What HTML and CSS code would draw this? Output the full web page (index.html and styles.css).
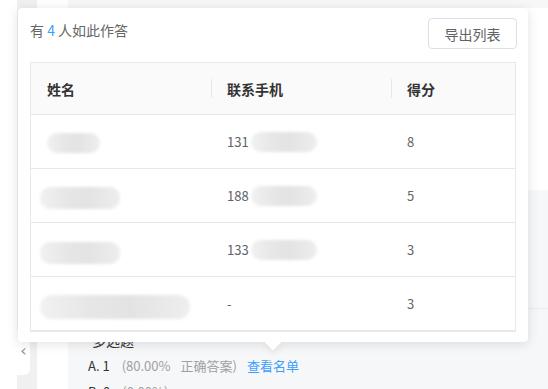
FILE: index.html
```html
<!DOCTYPE html>
<html lang="zh">
<head>
<meta charset="utf-8">
<link rel="stylesheet" href="styles.css">
</head>
<body>
<div class="page">
  <div class="gutter"></div>
  <div class="sidebar">
    <div class="handle"><span class="chev">‹</span></div>
  </div>
  <div class="strip"></div>
  <div class="content">
    <div class="card-top"></div>
    <div class="section">
      <div class="q-title">多选题</div>
      <div class="opt"><span class="opt-key">A. 1</span><span class="opt-meta">(80.00%</span><span class="opt-meta">正确答案)</span><a class="opt-link">查看名单</a></div>
      <div class="opt"><span class="opt-key">B. 0</span><span class="opt-meta">(0.00%)</span></div>
    </div>
  </div>

  <div class="popover">
    <div class="pop-head">
      <div class="pop-title">有 <span class="num">4</span> 人如此作答</div>
      <button class="btn">导出列表</button>
    </div>
    <div class="table">
      <div class="tr th">
        <div class="td">姓名</div>
        <div class="td sep">联系手机</div>
        <div class="td sep">得分</div>
      </div>
      <div class="tr">
        <div class="td"><span class="blob b1"></span></div>
        <div class="td">131<span class="blob p"></span></div>
        <div class="td score">8</div>
      </div>
      <div class="tr">
        <div class="td"><span class="blob b2"></span></div>
        <div class="td">188<span class="blob p"></span></div>
        <div class="td score">5</div>
      </div>
      <div class="tr">
        <div class="td"><span class="blob b3"></span></div>
        <div class="td">133<span class="blob p"></span></div>
        <div class="td score">3</div>
      </div>
      <div class="tr">
        <div class="td"><span class="blob b4"></span></div>
        <div class="td">-</div>
        <div class="td score">3</div>
      </div>
    </div>
    <div class="arrow"></div>
  </div>
</div>
</body>
</html>
```

FILE: styles.css
```css
* { box-sizing: border-box; }
html, body { margin: 0; padding: 0; }
body {
  width: 548px;
  height: 389px;
  overflow: hidden;
  background: #fff;
  font-family: "Noto Sans CJK SC", "Microsoft YaHei", sans-serif;
  font-size: 13px;
  color: #606266;
}
.page {
  position: relative;
  display: flex;
  height: 389px;
}
.gutter { width: 17px; background: #fff; }
.sidebar {
  width: 20px;
  background: #f0f0f0;
  padding-top: 330px;
}
.handle {
  width: 13px;
  height: 45px;
  background: #fff;
  border-radius: 0 0 6px 0;
  display: flex;
  align-items: center;
  justify-content: center;
  padding-bottom: 4px;
}
.chev { color: #909399; font-size: 16px; line-height: 1; font-family: "DejaVu Sans", sans-serif; }
.strip { width: 31px; background: #fff; }
.content {
  flex: 1;
  background: #f6f7f9;
  padding-top: 8px;
  display: flex;
  flex-direction: column;
  overflow: hidden;
}
.card-top {
  flex: 0 0 182px;
  background: #fff;
}
.section {
  flex: 1 0 auto;
  padding: 137px 0 0 20px;
  position: relative;
}
.section::before {
  content: "";
  position: absolute;
  left: 0; right: 0; top: 118px;
  height: 1px;
  background: #e9ebef;
}
.q-title {
  height: 26px;
  line-height: 26px;
  font-size: 14px;
  color: #303133;
  padding-left: 4px;
}
.opt {
  height: 26px;
  line-height: 26px;
  font-size: 13px;
  display: flex;
  white-space: nowrap;
}
.opt-key { color: #333; margin-right: 12px; }
.opt-meta { color: #a0a0a0; margin-right: 10px; }
.opt-link { color: #409eff; }

.popover {
  position: absolute;
  left: 18px;
  top: 8px;
  width: 510px;
  background: #fff;
  border-radius: 4px;
  box-shadow: 0 2px 12px rgba(0, 0, 0, 0.12);
  padding: 10px 12px 10px;
}
.pop-head {
  display: flex;
  justify-content: space-between;
  align-items: flex-start;
  height: 31px;
  margin-bottom: 13px;
}
.pop-title {
  padding-top: 2px;
  line-height: 20px;
  font-size: 14px;
  color: #666;
}
.num { color: #409eff; }
.btn {
  width: 89px;
  height: 31px;
  border: 1px solid #dcdfe6;
  border-radius: 4px;
  background: #fff;
  font-family: inherit;
  font-size: 14px;
  color: #606266;
  padding: 0;
  margin-right: -1px;
}
.table {
  border: 1px solid #e8e8e8;
}
.tr {
  display: grid;
  grid-template-columns: 180px 180px 1fr;
  height: 54px;
  border-bottom: 1px solid #e8e8e8;
  align-items: center;
  font-size: 13px;
  color: #606266;
}
.th {
  height: 52px;
  background: #fafafa;
  font-weight: 700;
  color: #333;
  font-size: 14px;
}
.td {
  position: relative;
  padding-left: 16px;
  display: flex;
  align-items: center;
  height: 100%;
}
.th .sep::before {
  content: "";
  position: absolute;
  left: 0;
  top: 16px;
  width: 1px;
  height: 19px;
  background: #e8e8e8;
}
.score { color: #666; }
.blob {
  display: inline-block;
  border-radius: 10px;
  background: linear-gradient(90deg, #f1f1f1 0%, #e6e6e6 35%, #e3e3e3 60%, #eeeeee 100%);
  filter: blur(1.5px);
}
.b1 { width: 53px; height: 20px; margin-top: 2px; }
.b2 { width: 80px; height: 22px; margin-left: -7px; margin-top: 4px; }
.b3 { width: 80px; height: 22px; margin-left: -7px; margin-top: 6px; }
.b4 { width: 150px; height: 24px; margin-left: -7px; margin-top: 6px; border-radius: 12px; }
.p { width: 66px; height: 20px; margin-left: 2px; }
.arrow {
  position: absolute;
  left: 249px;
  bottom: -6px;
  width: 12px;
  height: 12px;
  background: #fff;
  transform: rotate(45deg);
  box-shadow: 3px 3px 6px rgba(0, 0, 0, 0.06);
}
```
